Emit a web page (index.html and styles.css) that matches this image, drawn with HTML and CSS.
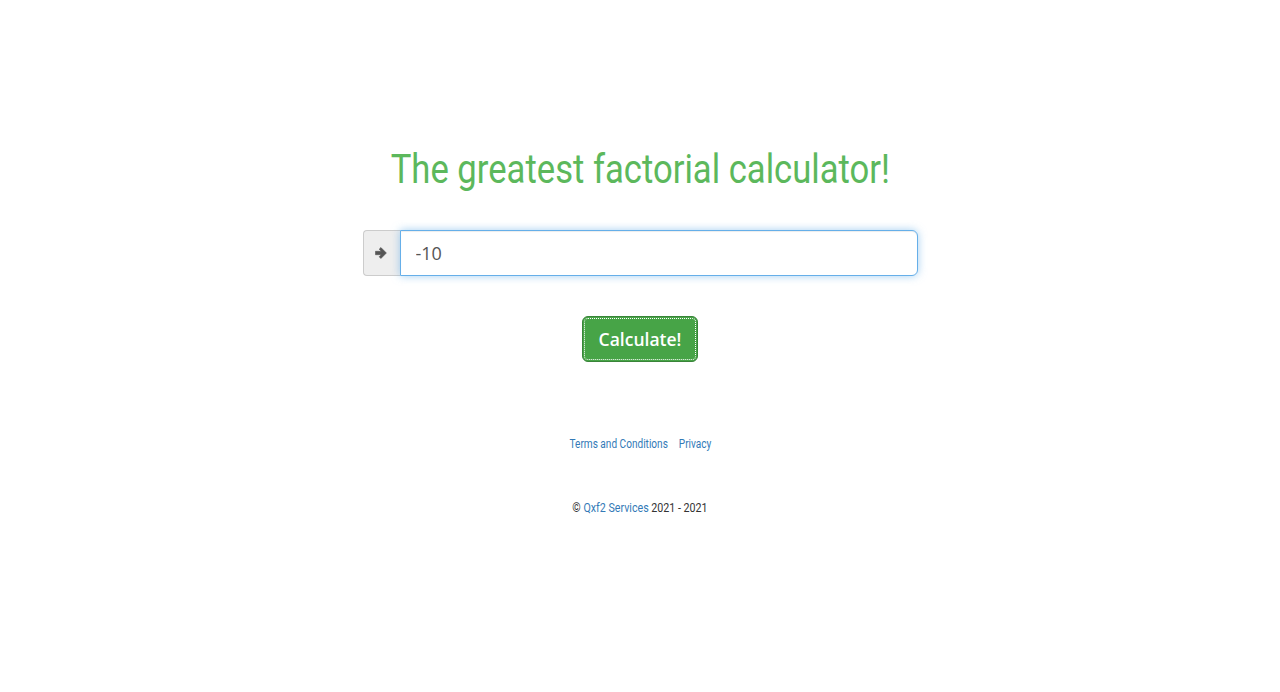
FILE: index.html
```html
<!DOCTYPE html>
<html>
<head>
<meta charset="utf-8">
<link rel="stylesheet" href="styles.css">
</head>
<body>
<main class="page">
  <h1 class="title"><span class="narrow">The greatest factorial calculator!</span></h1>
  <form class="calc">
    <div class="input-group">
      <span class="addon">
        <svg width="12" height="12" viewBox="0 0 12 12"><path d="M0.5 4.3h5.8L4.2 2.2 5.9 0.5 11.4 6l-5.5 5.5-1.7-1.7 2.1-2.1H0.5z" fill="#555" stroke="#555" stroke-width="0.6" stroke-linejoin="round"/></svg>
      </span>
      <input class="field" type="text" value="-10">
    </div>
    <button class="btn" type="button">Calculate!</button>
  </form>
  <nav class="links">
    <a href="#">Terms and Conditions</a>
    <a href="#">Privacy</a>
  </nav>
  <p class="copy">© <a href="#">Qxf2 Services</a> 2021 - 2021</p>
</main>
</body>
</html>
```
FILE: styles.css
```css
html, body { margin: 0; padding: 0; background: #fff; }
body { font-family: "Open Sans", sans-serif; color: #333; }
.page { display: flex; flex-direction: column; align-items: center; padding-top: 143px; }
.title {
  margin: 0; font-family: Roboto, sans-serif; font-weight: 400; font-size: 40px;
  line-height: 54px; color: #5cb85c; white-space: nowrap;
}
.narrow { display: inline-block; transform: scaleX(0.866); }
.calc { display: flex; flex-direction: column; align-items: center; margin-top: 33px; }
.input-group { display: flex; width: 555px; height: 46px; }
.addon {
  display: flex; align-items: center; justify-content: center;
  background: #eee; border: 1px solid #ccc; border-right: 0; border-radius: 4px 0 0 4px;
  box-sizing: border-box; width: 37px; padding-right: 2px;
}
.field {
  flex: 1; box-sizing: border-box; height: 46px; border: 1px solid #66afe9;
  border-radius: 0 6px 6px 0; padding: 0 15px; font-family: "Open Sans", sans-serif;
  font-size: 18px; color: #555; outline: none;
  box-shadow: inset 0 1px 1px rgba(0,0,0,.075), 0 0 8px rgba(102,175,233,.6);
}
.btn {
  margin-top: 40px; width: 116px; height: 46px; background: #47a447; color: #fff;
  border: 1px solid #398439; border-radius: 6px; font-family: "Open Sans", sans-serif;
  font-size: 17.5px; font-weight: 600; outline: 1px dotted #fff; outline-offset: -3px; padding: 0;
}
.links {
  margin-top: 74px; display: flex; gap: 13px; font-family: Roboto, sans-serif;
  font-size: 12px; line-height: 17px; transform: scaleX(0.84);
}
.links a, .copy a { color: #337ab7; text-decoration: none; }
.copy {
  margin: 47px 0 0; font-family: Roboto, sans-serif; font-size: 12px; line-height: 17px;
  color: #333; transform: scaleX(0.89);
}
```
